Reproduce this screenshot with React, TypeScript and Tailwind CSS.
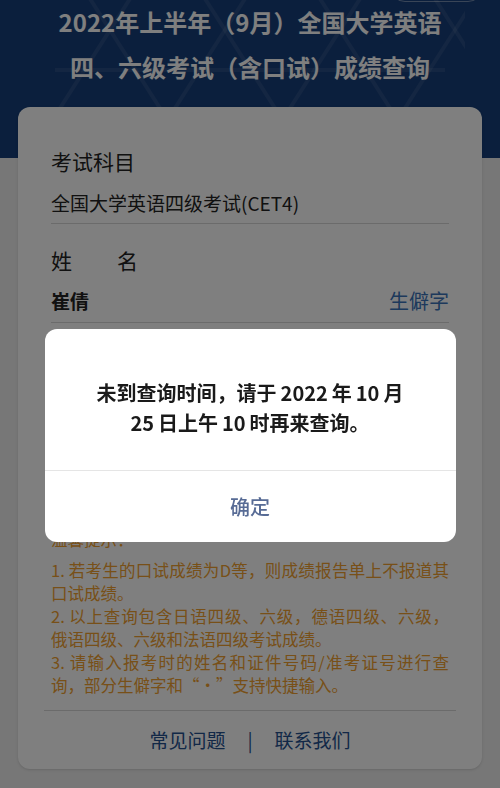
import React from 'react';

const HeaderPattern: React.FC = () => {
    // triangle lattice drawn faintly behind the title
    const apexes = [-5, 110, 225, 340, 455];
    const k = 48 / 75;
    return (
        <svg className="absolute inset-0 h-full w-full" viewBox="0 0 500 158" preserveAspectRatio="none">
            <defs>
                <clipPath id="hp">
                    <rect x="55" y="0" width="410" height="110" />
                </clipPath>
            </defs>
            <g clipPath="url(#hp)" stroke="rgba(255,255,255,0.08)" strokeWidth={4} fill="none">
                {apexes.map((x) => (
                    <g key={x}>
                        <line x1={x - 130 * k} y1={-100} x2={x + 80 * k} y2={110} />
                        <line x1={x + 130 * k} y1={-100} x2={x - 80 * k} y2={110} />
                    </g>
                ))}
                <line x1={55} y1={70} x2={445} y2={70} />
            </g>
        </svg>
    );
};

const App: React.FC = () => {
    const cjk = { fontFamily: '"Noto Sans CJK SC", "Noto Sans", sans-serif' };

    return (
        <div className="min-h-screen bg-[#eeeeee]" style={cjk}>
            <header className="relative h-[158px] bg-[#163e7a] overflow-hidden">
                <HeaderPattern />
                <div className="absolute right-[17px] top-[-28px] h-[30px] w-[93px] rounded-full border border-white/40" />
                <h1 className="relative -mt-[1px] text-center text-[24px] font-bold leading-[45px] text-white">
                    <div>2022年上半年（9月）全国大学英语</div>
                    <div>四、六级考试（含口试）成绩查询</div>
                </h1>
            </header>

            <div className="relative -mt-[51px] px-[18px] pb-[17px]">
                <div className="rounded-[12px] bg-white px-[33px] pt-[39px] pb-[14px] shadow-sm">
                    <div className="text-[21px] leading-[30px] text-[#222]">考试科目</div>
                    <div className="mt-[13px] text-[19px] leading-[28px] text-[#222]">全国大学英语四级考试(CET4)</div>
                    <div className="mt-[6px] h-px bg-[#d6d6d6]" />

                    <div className="mt-[21px] flex text-[21px] leading-[30px] text-[#222]">
                        <span className="inline-block w-[66px]">姓</span>
                        <span>名</span>
                    </div>
                    <div className="mt-[12px] flex items-center justify-between leading-[28px]">
                        <span className="text-[19px] font-bold text-[#222]">崔倩</span>
                        <span className="text-[20px] text-[#3a72b8]">生僻字</span>
                    </div>
                    <div className="mt-[7px] h-px bg-[#d6d6d6]" />

                    <div className="h-[205px] overflow-hidden pt-[20px]">
                        <div className="text-[21px] leading-[30px] text-[#222]">证件号码</div>
                        <div className="mt-[13px] text-[19px] leading-[28px] text-[#999]">请输入证件号码</div>
                        <div className="mt-[5px] h-px bg-[#d6d6d6]" />
                        <div className="mt-[30px] flex h-[46px] items-center justify-center rounded-full bg-[#3a72b8] text-[19px] text-white">
                            查询
                        </div>
                    </div>

                    <div className="text-[16.5px] leading-[23px] text-[#f0a030]">
                        <div className="mb-[8px]">温馨提示：</div>
                        <div className="whitespace-nowrap text-justify [text-align-last:justify]">1. 若考生的口试成绩为D等，则成绩报告单上不报道其</div>
                        <div>口试成绩。</div>
                        <div className="whitespace-nowrap text-justify [text-align-last:justify]">2. 以上查询包含日语四级、六级，德语四级、六级，</div>
                        <div>俄语四级、六级和法语四级考试成绩。</div>
                        <div className="whitespace-nowrap text-justify [text-align-last:justify]">3. 请输入报考时的姓名和证件号码/准考证号进行查</div>
                        <div>询，部分生僻字和“·”支持快捷输入。</div>
                    </div>

                    <div className="-mx-[7px] mt-[13px] h-px bg-[#d6d6d6]" />
                    <div className="flex items-center justify-center gap-[22px] pt-[15px] pb-[1px] text-[19px] leading-[28px] text-[#24508f]">
                        <span>常见问题</span>
                        <span>|</span>
                        <span>联系我们</span>
                    </div>
                </div>
            </div>

            {/* dialog */}
            <div className="fixed inset-0 bg-black/50">
                <div className="mx-auto mt-[329px] w-[411px] overflow-hidden rounded-[12px] bg-white">
                    <div className="flex flex-col items-center px-[24px] pt-[49px] pb-[32px] text-[20px] font-semibold leading-[30px] text-[#1a1a1a]">
                        <p>
                            未到查询时间，请于<span className="mx-[4px]">2022</span>年<span className="mx-[4px]">10</span>月
                        </p>
                        <p>
                            <span className="mr-[4px]">25</span>日上午<span className="mx-[4px]">10</span>时再来查询。
                        </p>
                    </div>
                    <div className="h-px bg-[#e5e5e5]" />
                    <div className="flex h-[71px] items-center justify-center text-[20px] font-medium text-[#576b95]">
                        确定
                    </div>
                </div>
            </div>
        </div>
    );
};

export default App;
